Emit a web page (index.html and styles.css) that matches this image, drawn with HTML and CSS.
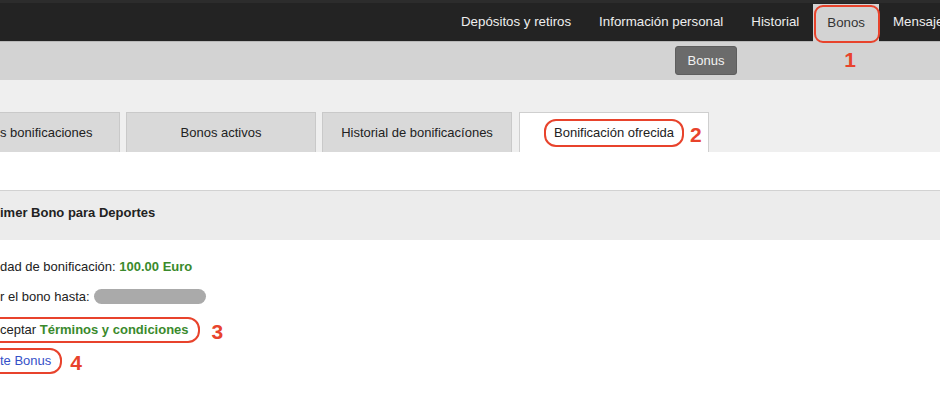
FILE: index.html
```html
<!DOCTYPE html>
<html lang="es">
<head>
    <meta charset="UTF-8">
    <meta name="viewport" content="width=device-width, initial-scale=1.0">
    <title>Bonos</title>
    <link rel="stylesheet" href="styles.css">
</head>
<body>
    <div class="topbar">
        <ul class="nav">
            <li>Depósitos y retiros</li>
            <li>Información personal</li>
            <li>Historial</li>
            <li class="active">Bonos<span class="note note-1">1</span></li>
            <li>Mensajes</li>
        </ul>
    </div>
    <div class="subbar">
        <button class="sub-btn">Bonus</button>
    </div>
    <div class="tabs-area">
        <div class="tabs">
            <div class="tab tab-cut">s bonificaciones</div>
            <div class="tab">Bonos activos</div>
            <div class="tab">Historial de bonificacíones</div>
            <div class="tab tab-active">
                <span class="mark mark-tab">Bonificación ofrecida<span class="note note-2">2</span></span>
            </div>
        </div>
    </div>
    <div class="gap"></div>
    <div class="section-head">imer Bono para Deportes</div>
    <div class="details">
        <div class="row">dad de bonificación: <b class="green">100.00 Euro</b></div>
        <div class="row">r el bono hasta: <span class="hidden-date"></span></div>
        <div class="row row-mark">
            <span class="mark mark-left">ceptar <b class="green">Términos y condiciones</b><span class="note note-3">3</span></span>
        </div>
        <div class="row row-mark row-last">
            <span class="mark mark-left"><a href="#" class="link">te Bonus</a><span class="note note-4">4</span></span>
        </div>
    </div>
</body>
</html>
```

FILE: styles.css
```css
body {
    margin: 0;
    font-family: "Liberation Sans", Arial, sans-serif;
    font-size: 13px;
    color: #222;
    background: #fff;
    overflow: hidden;
}
.topbar {
    height: 42px;
    background: #232323;
    border-top: 3px solid #2c2c2c;
    box-sizing: border-box;
    border-bottom: 1px solid #b8b8b8;
}
.nav {
    list-style: none;
    margin: 0;
    padding: 0 0 0 447px;
    display: flex;
    white-space: nowrap;
    height: 100%;
}
.nav li {
    padding: 0 14px;
    font-size: 13.3px;
    color: #eee;
    line-height: 38px;
    position: relative;
}
.nav li.active {
    background: #d3d3d3;
    color: #333;
    margin-top: 1px;
    margin-bottom: -1px;
    line-height: 37px;
    padding: 0 14px;
    width: 38px;
    text-align: center;
}
.nav li.active::after {
    content: "";
    position: absolute;
    left: 1px;
    right: -1px;
    top: 1px;
    bottom: -1px;
    border: 2px solid #e8432c;
    border-radius: 9px;
}
.note {
    position: absolute;
    color: #e8432c;
    font-weight: bold;
    font-size: 21px;
    line-height: 20px;
}
.note-1 {
    left: 31px;
    top: 46px;
}
.subbar {
    height: 38px;
    background: #d3d3d3;
    padding-left: 675px;
    box-sizing: border-box;
    padding-top: 4px;
}
.sub-btn {
    height: 29px;
    width: 62px;
    background: #6b6b6b;
    color: #f2f2f2;
    border: 1px solid #5e5e5e;
    border-radius: 3px;
    font-family: "Liberation Sans", Arial, sans-serif;
    font-size: 13px;
    padding: 0;
}
.tabs-area {
    background: #efefef;
    height: 72px;
    padding-top: 32px;
    box-sizing: border-box;
}
.tabs {
    display: flex;
    gap: 6px;
    height: 40px;
}
.tab {
    width: 190px;
    box-sizing: border-box;
    background: #d9d9d9;
    border: 1px solid #c9c9c9;
    border-bottom: none;
    text-align: center;
    line-height: 39px;
    white-space: nowrap;
}
.tab-cut {
    width: 120px;
    border-left: none;
    text-align: left;
}
.tab-active {
    background: #fff;
    border-color: #cfcfcf;
    margin-left: 1px;
    line-height: 20px;
    padding-top: 6px;
}
.mark {
    display: inline-block;
    position: relative;
    border: 2px solid #e8432c;
    border-radius: 12px;
    padding: 2px 8px;
    line-height: 18px;
}
.mark-tab {
    padding: 3px 8px;
}
.note-2 {
    left: calc(100% + 8px);
    top: 4px;
}
.gap {
    height: 38px;
}
.section-head {
    height: 50px;
    box-sizing: border-box;
    background: #ececec;
    border-top: 1px solid #d2d2d2;
    padding-top: 14px;
    font-weight: bold;
    line-height: 16px;
}
.details {
    padding-top: 17px;
}
.row {
    line-height: 20px;
    margin-bottom: 10px;
    white-space: nowrap;
}
.row-mark {
    line-height: 18px;
}
.row-last {
    margin-top: -5px;
}
.green {
    color: #3a8a2c;
}
.hidden-date {
    display: inline-block;
    width: 112px;
    height: 15px;
    border-radius: 8px;
    background: #aaa;
    vertical-align: -3px;
    margin-left: 1px;
}
.mark-left {
    margin-left: -17px;
    padding-left: 15px;
    padding-right: 9px;
}
.note-3 {
    left: calc(100% + 14px);
    top: 3px;
}
.note-4 {
    left: calc(100% + 10px);
    top: 3px;
}
.link {
    color: #3550c8;
    text-decoration: none;
}
```
